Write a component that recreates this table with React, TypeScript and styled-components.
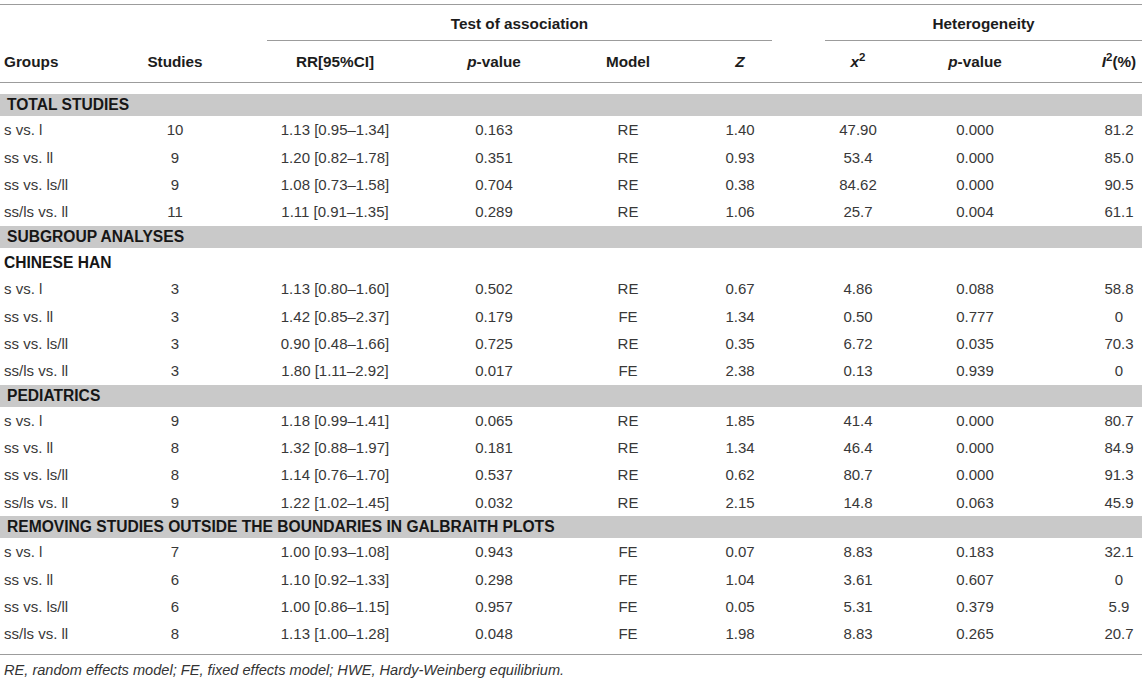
import React from "react";
import styled, { createGlobalStyle } from "styled-components";

const Global = createGlobalStyle`
  html, body { margin: 0; padding: 0; background: #ffffff; }
  body { font-family: "Liberation Sans", Arial, Helvetica, sans-serif; color: #333; }
`;

const COLS = "120px 110px 210px 108px 160px 64px 172px 62px 90px 46px";

const Page = styled.div`
  width: 1142px;
  padding-top: 4px;
`;

const Table = styled.div`
  display: flex;
  flex-direction: column;
  border-top: 1px solid #9c9c9c;
`;

const Grid = styled.div<{ $h: number }>`
  display: grid;
  grid-template-columns: ${COLS};
  height: ${(p) => p.$h}px;
  align-items: center;
`;

const HeadGrid = styled(Grid)`
  align-items: stretch;
`;

const SpanHead = styled.div<{ $from: number; $to: number; $inset: number }>`
  grid-column: ${(p) => p.$from} / ${(p) => p.$to};
  margin-left: ${(p) => p.$inset}px;
  border-bottom: 1px solid #9c9c9c;
  display: flex;
  align-items: center;
  justify-content: center;
  padding-top: 2px;
  font-weight: bold;
  font-size: 15.3px;
  color: #1c1c1c;
`;

const HeadRow = styled(Grid)`
  border-bottom: 1px solid #9c9c9c;
`;

const HeadCell = styled.div<{ $left?: boolean; $at?: number }>`
  ${(p) => (p.$at ? `grid-column: ${p.$at};` : "")}
  text-align: ${(p) => (p.$left ? "left" : "center")};
  padding-left: ${(p) => (p.$left ? "4px" : "0")};
  font-weight: bold;
  font-size: 15.3px;
  color: #1c1c1c;
  white-space: nowrap;
  i { font-style: italic; }
  sup { font-size: 11.5px; font-weight: bold; vertical-align: 6px; line-height: 0; font-style: normal; }
`;

const Body = styled.div`
  display: flex;
  flex-direction: column;
  padding-top: 11px;
  padding-bottom: 6px;
  border-bottom: 1px solid #9c9c9c;
`;

const Band = styled.div`
  height: 22px;
  background: #c9c9c9;
  display: flex;
  align-items: center;
  padding-left: 7px;
  font-weight: bold;
  font-size: 15.6px;
  color: #161616;
  white-space: nowrap;
`;

const SubHead = styled.div`
  height: 27.4px;
  display: flex;
  align-items: center;
  padding-left: 4px;
  padding-top: 4px;
  box-sizing: border-box;
  font-weight: bold;
  font-size: 15.6px;
  color: #161616;
`;

const Cell = styled.div<{ $left?: boolean; $at?: number }>`
  ${(p) => (p.$at ? `grid-column: ${p.$at};` : "")}
  text-align: ${(p) => (p.$left ? "left" : "center")};
  padding-left: ${(p) => (p.$left ? "4px" : "0")};
  font-size: 15px;
  color: #383838;
  white-space: nowrap;
`;

const Footnote = styled.div`
  padding-left: 4px;
  height: 30px;
  display: flex;
  align-items: center;
  font-style: italic;
  font-size: 14.6px;
  color: #333;
`;

type Row = [string, string, string, string, string, string, string, string, string];

type Section =
  | { kind: "band"; title: string }
  | { kind: "sub"; title: string }
  | { kind: "rows"; rows: Row[] };

const sections: Section[] = [
  { kind: "band", title: "TOTAL STUDIES" },
  {
    kind: "rows",
    rows: [
      ["s vs. l", "10", "1.13 [0.95–1.34]", "0.163", "RE", "1.40", "47.90", "0.000", "81.2"],
      ["ss vs. ll", "9", "1.20 [0.82–1.78]", "0.351", "RE", "0.93", "53.4", "0.000", "85.0"],
      ["ss vs. ls/ll", "9", "1.08 [0.73–1.58]", "0.704", "RE", "0.38", "84.62", "0.000", "90.5"],
      ["ss/ls vs. ll", "11", "1.11 [0.91–1.35]", "0.289", "RE", "1.06", "25.7", "0.004", "61.1"],
    ],
  },
  { kind: "band", title: "SUBGROUP ANALYSES" },
  { kind: "sub", title: "CHINESE HAN" },
  {
    kind: "rows",
    rows: [
      ["s vs. l", "3", "1.13 [0.80–1.60]", "0.502", "RE", "0.67", "4.86", "0.088", "58.8"],
      ["ss vs. ll", "3", "1.42 [0.85–2.37]", "0.179", "FE", "1.34", "0.50", "0.777", "0"],
      ["ss vs. ls/ll", "3", "0.90 [0.48–1.66]", "0.725", "RE", "0.35", "6.72", "0.035", "70.3"],
      ["ss/ls vs. ll", "3", "1.80 [1.11–2.92]", "0.017", "FE", "2.38", "0.13", "0.939", "0"],
    ],
  },
  { kind: "band", title: "PEDIATRICS" },
  {
    kind: "rows",
    rows: [
      ["s vs. l", "9", "1.18 [0.99–1.41]", "0.065", "RE", "1.85", "41.4", "0.000", "80.7"],
      ["ss vs. ll", "8", "1.32 [0.88–1.97]", "0.181", "RE", "1.34", "46.4", "0.000", "84.9"],
      ["ss vs. ls/ll", "8", "1.14 [0.76–1.70]", "0.537", "RE", "0.62", "80.7", "0.000", "91.3"],
      ["ss/ls vs. ll", "9", "1.22 [1.02–1.45]", "0.032", "RE", "2.15", "14.8", "0.063", "45.9"],
    ],
  },
  { kind: "band", title: "REMOVING STUDIES OUTSIDE THE BOUNDARIES IN GALBRAITH PLOTS" },
  {
    kind: "rows",
    rows: [
      ["s vs. l", "7", "1.00 [0.93–1.08]", "0.943", "FE", "0.07", "8.83", "0.183", "32.1"],
      ["ss vs. ll", "6", "1.10 [0.92–1.33]", "0.298", "FE", "1.04", "3.61", "0.607", "0"],
      ["ss vs. ls/ll", "6", "1.00 [0.86–1.15]", "0.957", "FE", "0.05", "5.31", "0.379", "5.9"],
      ["ss/ls vs. ll", "8", "1.13 [1.00–1.28]", "0.048", "FE", "1.98", "8.83", "0.265", "20.7"],
    ],
  },
];

const DataRow: React.FC<{ row: Row }> = ({ row }) => (
  <Grid $h={27.4}>
    {row.map((v, i) => (
      <Cell key={i} $left={i === 0} $at={i === 8 ? 10 : undefined}>
        {v}
      </Cell>
    ))}
  </Grid>
);

export default function App() {
  return (
    <>
      <Global />
      <Page>
        <Table>
          <HeadGrid $h={36}>
            <SpanHead $from={3} $to={7} $inset={37}>Test of association</SpanHead>
            <SpanHead $from={7} $to={11} $inset={53}>Heterogeneity</SpanHead>
          </HeadGrid>
          <HeadRow $h={41}>
            <HeadCell $left>Groups</HeadCell>
            <HeadCell>Studies</HeadCell>
            <HeadCell>RR[95%CI]</HeadCell>
            <HeadCell><i>p</i>-value</HeadCell>
            <HeadCell>Model</HeadCell>
            <HeadCell><i>Z</i></HeadCell>
            <HeadCell><i>x</i><sup>2</sup></HeadCell>
            <HeadCell><i>p</i>-value</HeadCell>
            <HeadCell $at={10}><i>I</i><sup>2</sup>(%)</HeadCell>
          </HeadRow>
          <Body>
            {sections.map((s, i) =>
              s.kind === "band" ? (
                <Band key={i}>{s.title}</Band>
              ) : s.kind === "sub" ? (
                <SubHead key={i}>{s.title}</SubHead>
              ) : (
                s.rows.map((r, j) => <DataRow key={`${i}-${j}`} row={r} />)
              )
            )}
          </Body>
          <Footnote>RE, random effects model; FE, fixed effects model; HWE, Hardy-Weinberg equilibrium.</Footnote>
        </Table>
      </Page>
    </>
  );
}
